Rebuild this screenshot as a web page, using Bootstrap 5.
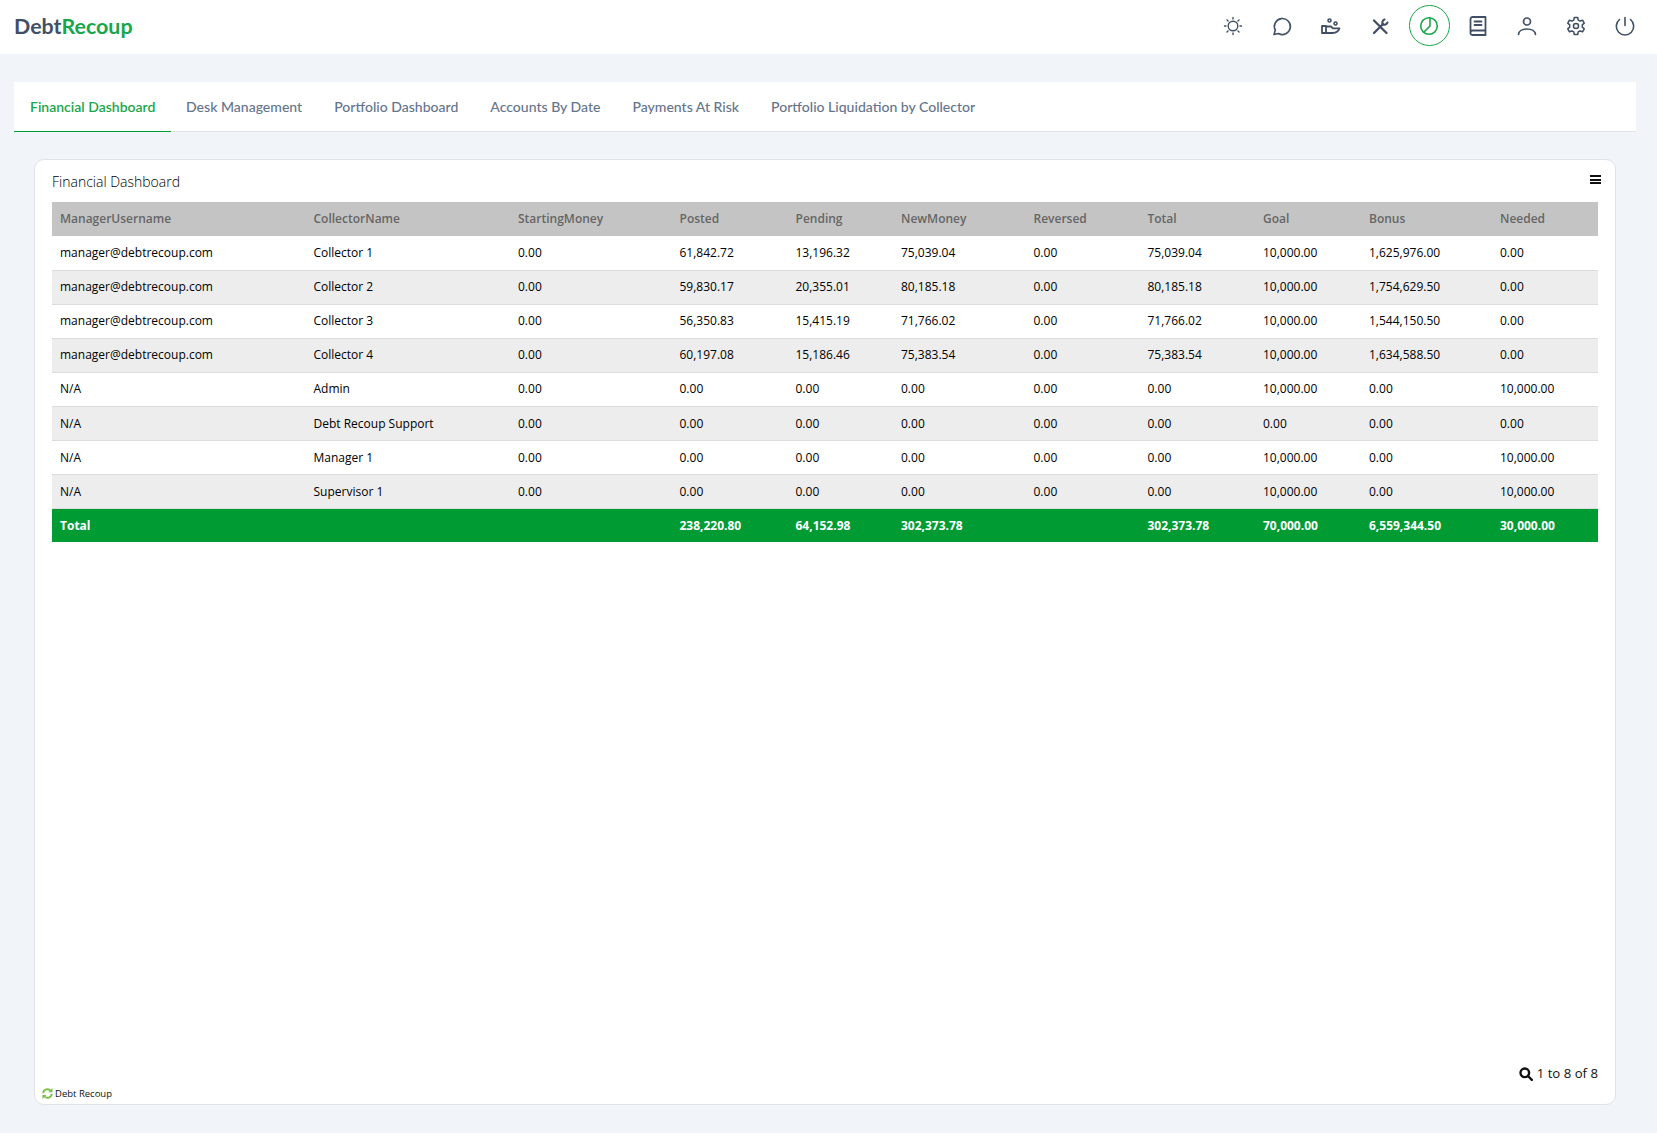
<!DOCTYPE html>
<html lang="en"><head><meta charset="utf-8"><title>Debt Recoup</title>
<link href="https://cdn.jsdelivr.net/npm/bootstrap@5.3.0/dist/css/bootstrap.min.css" rel="stylesheet">
<style>
html,body{height:100%}
body{background:#f1f4f9;font-family:"Open Sans",sans-serif;color:#000;overflow:hidden}
.shell{height:1133px}
.topbar{height:54px;background:#fff;padding:0 7.5px 0 14px}
.brand-name{font-family:Lato,sans-serif;font-weight:700;font-size:21.4px;color:#414f66;padding-bottom:1px}
.brand-name span{color:#1aa64b}
.tool-row{padding-bottom:3px}
.tool-icon{width:49px;height:42px;color:#414f66}
.tool-icon svg{width:24px;height:24px;fill:none;stroke:currentColor;stroke-width:1.6;stroke-linecap:round;stroke-linejoin:round}
.tool-icon.is-on{color:#1aa64b}
.tool-icon.is-on span{width:41px;height:41px;border:1.3px solid #1aa64b;border-radius:50%}
.work{padding:28px 21px 28px 14px;min-height:0}
.tab-strip{background:#fff;border-bottom:1px solid #dfe4ec;height:50px}
.tab-strip .nav-link{font-family:Lato,sans-serif;font-size:14.04px;font-weight:500;color:#64748b;padding:0 16px;height:50px;line-height:50px;border-bottom:1px solid transparent;border-radius:0}
.tab-strip .nav-item:nth-child(2){margin-left:-1.4px}
.tab-strip .nav-link.active{color:#1aa64b;background:transparent;border-bottom-color:#009c33;font-weight:600;font-size:14px}
.sheet{margin:27px 20px 0;border:1px solid #dfe2e8;border-radius:10px;background:#fff;min-height:0;padding:0 17px}
.sheet-title{font-size:14px;font-weight:300;height:42px;padding-top:11px;line-height:21px;color:#000}
.burger{width:11px;height:9px;border-top:2px solid #111;border-bottom:2px solid #111;position:relative;margin:4px -3px 0 0}
.burger::after{content:"";position:absolute;left:0;right:0;top:1.5px;height:2px;background:#111}
.data-grid{table-layout:fixed;width:100%;font-size:12px;margin:0;border-collapse:collapse}
.data-grid th,.data-grid td{padding:0 8px;height:34.1px;white-space:nowrap;vertical-align:middle;border:0}
.data-grid thead th{background:#c4c4c4;color:#666;font-weight:600;height:34px}
.data-grid tbody td{border-bottom:1px solid #dcdcdc}
.data-grid tbody tr:nth-child(even) td{background:#ededed}
.data-grid tfoot td{background:#009c33;color:#fff;font-weight:700;height:33px}
.w1{width:253.5px}.w2{width:204.5px}.w3{width:161.5px}.w4{width:116px}.w5{width:105.5px}.w6{width:132.5px}.w7{width:114px}.w8{width:115.5px}.w9{width:106px}.w10{width:131px}.w11{width:106px}
.page-count{font-size:13.2px;margin-bottom:3px;color:#111}
.credit{font-size:9.5px;color:#111;margin:0 0 3px -10px}
.credit svg{margin-right:2px}
</style></head><body>
<div class="shell d-flex flex-column">
<header class="topbar d-flex align-items-center justify-content-between">
<div class="brand-name">Debt<span>Recoup</span></div>
<nav class="tool-row d-flex align-items-center" aria-label="Tools">
<div class="tool-icon d-flex align-items-center justify-content-center"><svg viewBox="0 0 24 24"><circle cx="12" cy="12" r="4.800" stroke-width="1.400"/><path stroke-width="1.400" d="M12 3.500v1.500M12 19v1.500M3.500 12H5M19 12h1.500M6 6l1 1M17 17l1 1M6 18l1-1M17 7l1-1"/></svg></div>
<div class="tool-icon d-flex align-items-center justify-content-center"><svg viewBox="0 0 24 24"><path d="M4 20.500l1.300-4.300A8 8 0 1 1 8.500 19.500z"/></svg></div>
<div class="tool-icon d-flex align-items-center justify-content-center"><svg viewBox="0 0 24 24"><path stroke-width="1.800" d="M3 12h4v7H3zM7 12.500h5l2 1.800h6.500c-1 3-4 4.700-7 4.700H7z"/><circle cx="10.500" cy="6.500" r="1.500"/><circle cx="16.500" cy="9.500" r="1.500"/></svg></div>
<div class="tool-icon d-flex align-items-center justify-content-center"><svg viewBox="0 0 24 24"><path stroke-width="2.300" d="M6 19l9-9M6 6.500 18.500 19"/><path stroke-width="2.100" d="M16.500 5.500c-2 .8-2.800 3-1.800 4.800 1.800 1 4 .2 4.800-1.800"/></svg></div>
<div class="tool-icon is-on d-flex align-items-center justify-content-center"><span class="d-flex align-items-center justify-content-center"><svg viewBox="0 0 24 24"><circle cx="12" cy="12" r="8.300"/><path d="M13 4v8l-6 6"/></svg></span></div>
<div class="tool-icon d-flex align-items-center justify-content-center"><svg viewBox="0 0 24 24"><path stroke-width="1.800" d="M4.500 18.500V5a2 2 0 0 1 2-2h13v18h-13a2 2 0 0 1-2-2.500 2 2 0 0 1 2-2h13M8.500 7.500h7M8.500 11h7"/></svg></div>
<div class="tool-icon d-flex align-items-center justify-content-center"><svg viewBox="0 0 24 24"><circle cx="12" cy="7.500" r="3.500" stroke-width="1.700"/><path stroke-width="1.700" d="M3.500 20.500c.2-3.500 4-5.500 8.500-5.500s8.300 2 8.500 5.500"/></svg></div>
<div class="tool-icon d-flex align-items-center justify-content-center"><svg viewBox="0 0 24 24"><g transform="translate(1.800 1.800) scale(.85)"><circle cx="12" cy="12" r="3" stroke-width="1.800"/><path stroke-width="1.800" d="M10 2h4l.6 3 2.200 1.200 2.900-1 2 3.500-2.300 2v2.600l2.300 2-2 3.500-2.900-1-2.200 1.200-.6 3h-4l-.6-3-2.200-1.200-2.900 1-2-3.500 2.300-2v-2.600l-2.300-2 2-3.500 2.900 1L9.400 5z"/></g></svg></div>
<div class="tool-icon d-flex align-items-center justify-content-center"><svg viewBox="0 0 24 24"><path d="M12 3.500v8M6.500 5.500a8.700 8.700 0 1 0 11 0"/></svg></div>
</nav>
</header>
<main class="work flex-grow-1 d-flex flex-column">
<ul class="nav tab-strip">
<li class="nav-item"><a class="nav-link active" href="#">Financial Dashboard</a></li>
<li class="nav-item"><a class="nav-link" href="#">Desk Management</a></li>
<li class="nav-item"><a class="nav-link" href="#">Portfolio Dashboard</a></li>
<li class="nav-item"><a class="nav-link" href="#">Accounts By Date</a></li>
<li class="nav-item"><a class="nav-link" href="#">Payments At Risk</a></li>
<li class="nav-item"><a class="nav-link" href="#">Portfolio Liquidation by Collector</a></li>
</ul>
<section class="sheet flex-grow-1 d-flex flex-column">
<div class="sheet-title d-flex justify-content-between"><span>Financial Dashboard</span><span class="burger"></span></div>
<table class="data-grid">
<colgroup><col class="w1"><col class="w2"><col class="w3"><col class="w4"><col class="w5"><col class="w6"><col class="w7"><col class="w8"><col class="w9"><col class="w10"><col class="w11"></colgroup>
<thead><tr><th>ManagerUsername</th><th>CollectorName</th><th>StartingMoney</th><th>Posted</th><th>Pending</th><th>NewMoney</th><th>Reversed</th><th>Total</th><th>Goal</th><th>Bonus</th><th>Needed</th></tr></thead>
<tbody>
<tr><td>manager@debtrecoup.com</td><td>Collector 1</td><td>0.00</td><td>61,842.72</td><td>13,196.32</td><td>75,039.04</td><td>0.00</td><td>75,039.04</td><td>10,000.00</td><td>1,625,976.00</td><td>0.00</td></tr>
<tr><td>manager@debtrecoup.com</td><td>Collector 2</td><td>0.00</td><td>59,830.17</td><td>20,355.01</td><td>80,185.18</td><td>0.00</td><td>80,185.18</td><td>10,000.00</td><td>1,754,629.50</td><td>0.00</td></tr>
<tr><td>manager@debtrecoup.com</td><td>Collector 3</td><td>0.00</td><td>56,350.83</td><td>15,415.19</td><td>71,766.02</td><td>0.00</td><td>71,766.02</td><td>10,000.00</td><td>1,544,150.50</td><td>0.00</td></tr>
<tr><td>manager@debtrecoup.com</td><td>Collector 4</td><td>0.00</td><td>60,197.08</td><td>15,186.46</td><td>75,383.54</td><td>0.00</td><td>75,383.54</td><td>10,000.00</td><td>1,634,588.50</td><td>0.00</td></tr>
<tr><td>N/A</td><td>Admin</td><td>0.00</td><td>0.00</td><td>0.00</td><td>0.00</td><td>0.00</td><td>0.00</td><td>10,000.00</td><td>0.00</td><td>10,000.00</td></tr>
<tr><td>N/A</td><td>Debt Recoup Support</td><td>0.00</td><td>0.00</td><td>0.00</td><td>0.00</td><td>0.00</td><td>0.00</td><td>0.00</td><td>0.00</td><td>0.00</td></tr>
<tr><td>N/A</td><td>Manager 1</td><td>0.00</td><td>0.00</td><td>0.00</td><td>0.00</td><td>0.00</td><td>0.00</td><td>10,000.00</td><td>0.00</td><td>10,000.00</td></tr>
<tr><td>N/A</td><td>Supervisor 1</td><td>0.00</td><td>0.00</td><td>0.00</td><td>0.00</td><td>0.00</td><td>0.00</td><td>10,000.00</td><td>0.00</td><td>10,000.00</td></tr>
</tbody>
<tfoot><tr><td>Total</td><td></td><td></td><td>238,220.80</td><td>64,152.98</td><td>302,373.78</td><td></td><td>302,373.78</td><td>70,000.00</td><td>6,559,344.50</td><td>30,000.00</td></tr></tfoot>
</table>
<div class="mt-auto page-count d-flex justify-content-end align-items-center gap-1">
<svg width="14" height="14" viewBox="0 0 14 14" fill="none" stroke="#111" stroke-width="2.400"><circle cx="5.800" cy="5.800" r="4.300"/><path d="M9 9l3.800 3.800" stroke-linecap="round"/></svg><span>1 to 8 of 8</span></div>
<div class="credit d-flex align-items-center">
<svg width="11" height="11" viewBox="0 0 12 12" fill="none" stroke="#7ac143" stroke-width="2"><path d="M1.200 5.500a4.800 4.800 0 0 1 8.300-2.500M10.800 6.500a4.800 4.800 0 0 1-8.300 2.500"/><path fill="#7ac143" stroke="none" d="M11.500 0v4.500H7zM.5 12V7.500H5z"/></svg><span>Debt Recoup</span></div>
</section>
</main>
</div>
</body></html>
